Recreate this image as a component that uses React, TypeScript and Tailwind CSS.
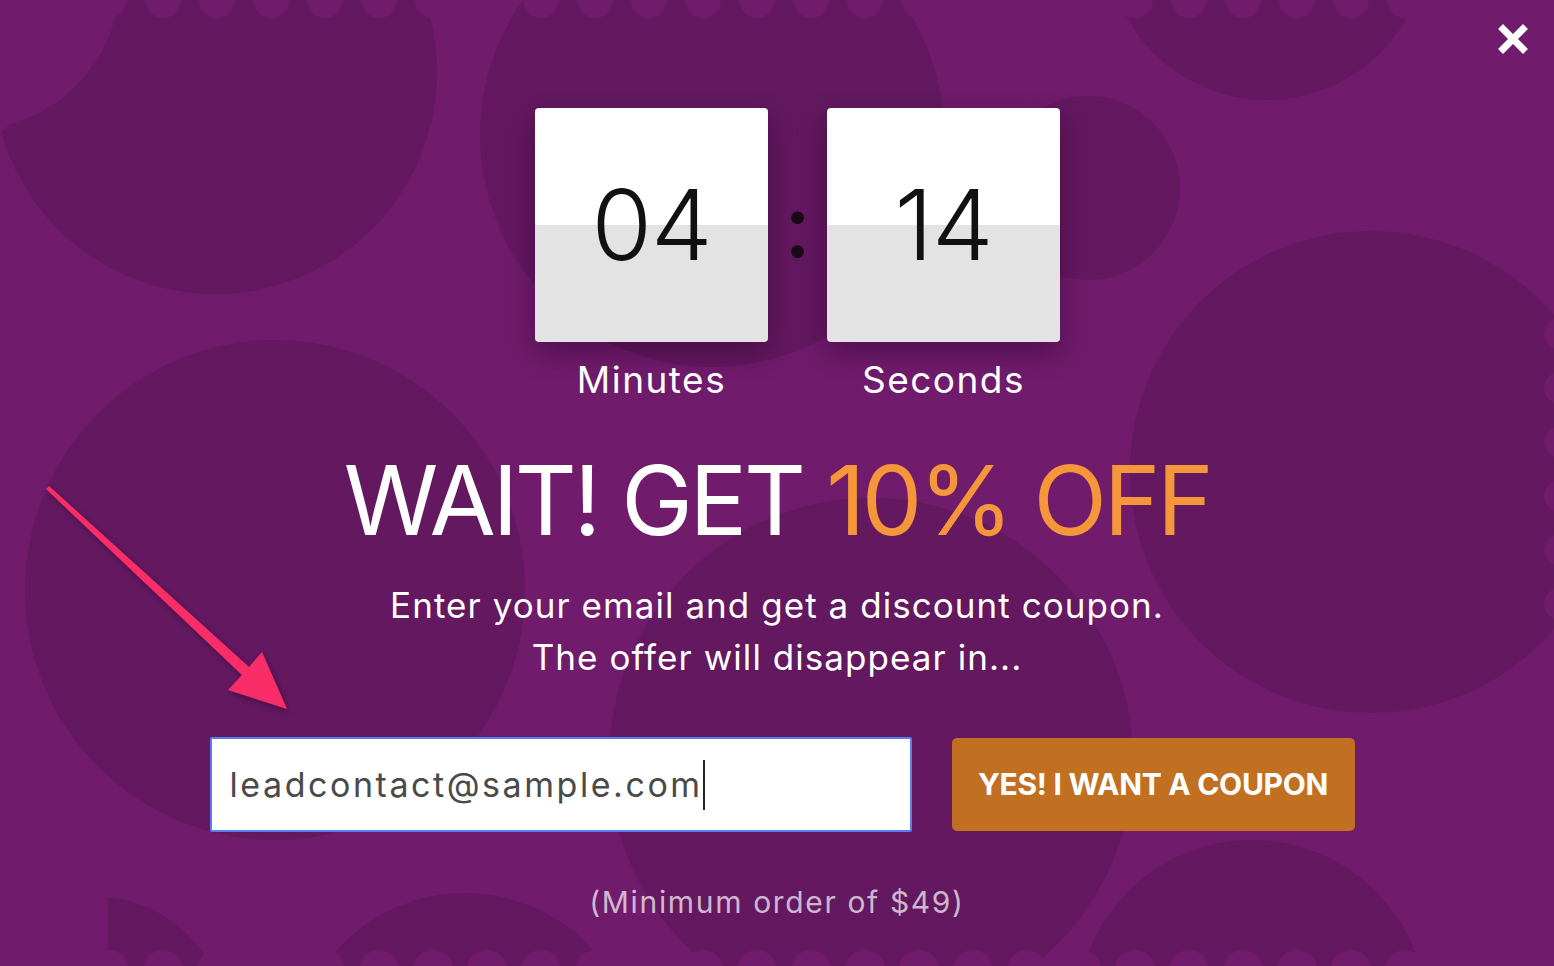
import { X } from "lucide-react";

const BASE = "#701b6c";
const DARK = "#63185f";

// decorative blobs behind the popup
const blobs: [number, number, number][] = [
  [215, 72, 222],
  [712, 135, 232],
  [1088, 188, 92],
  [1267, -60, 160],
  [1371, 472, 241],
  [275, 590, 250],
  [871, 760, 262],
  [465, 1066, 173],
  [1252, 1015, 175],
];

function Backdrop() {
  const top = Array.from({ length: 30 }, (_, i) => 1 + i * 54);
  const side = Array.from({ length: 19 }, (_, i) => 10 + i * 54);
  return (
    <svg
      className="absolute inset-0 pointer-events-none"
      width="1554"
      height="966"
      viewBox="0 0 1554 966">
      {blobs.map(([cx, cy, r], i) => (
        <circle key={i} cx={cx} cy={cy} r={r} fill={DARK} />
      ))}
      <path d="M108,966 L108,897 Q175,905 212,966 Z" fill={DARK} />
      <circle cx={-30} cy={-20} r={150} fill={BASE} />
      {top.map((x) => (
        <circle key={"t" + x} cx={x} cy={0} r={18} fill={BASE} />
      ))}
      {top.map((x) => (
        <circle key={"b" + x} cx={x} cy={970} r={20} fill={BASE} />
      ))}
      {side.map((y) => (
        <circle key={"l" + y} cx={-6} cy={y} r={16} fill={BASE} />
      ))}
      {side.map((y) => (
        <circle key={"r" + y} cx={1560} cy={y} r={16} fill={BASE} />
      ))}
    </svg>
  );
}

function Arrow() {
  return (
    <svg
      className="absolute left-0 top-0 pointer-events-none"
      width="320"
      height="740"
      viewBox="0 0 320 740">
      <defs>
        <filter id="arrowShadow" x="-20%" y="-20%" width="140%" height="140%">
          <feDropShadow dx="2" dy="3" stdDeviation="3" floodColor="#000" floodOpacity="0.3" />
        </filter>
      </defs>
      <path
        d="M46,489 L49,486 L249,667 L262,652 L287,709 L228,690 L242,675 Z"
        fill="#f92d69"
        filter="url(#arrowShadow)"
      />
    </svg>
  );
}

function TimeBox({ value, label }: { value: string; label: string }) {
  return (
    <div className="flex flex-col items-center">
      <div className="w-[233px] h-[234px] rounded-[4px] bg-[linear-gradient(to_bottom,#ffffff_50%,#e3e3e3_50%)] shadow-[0_10px_28px_rgba(40,0,40,0.45)] flex items-center justify-center">
        <span className="text-[98px] leading-none font-light text-[#111] tracking-[-0.01em]">
          {value}
        </span>
      </div>
      <p className="mt-[16px] text-[37px] leading-[44px] text-white tracking-[0.04em]">{label}</p>
    </div>
  );
}

export default function App() {
  return (
    <div
      className="relative w-full h-[966px] overflow-hidden bg-[#701b6c] font-['Inter',sans-serif]">
      <Backdrop />
      <Arrow />

      <button className="absolute top-[19px] right-[21px] text-white z-20" title="Close">
        <X size={40} strokeWidth={4.2} strokeLinecap="square" />
      </button>

      <div className="relative z-10 flex flex-col items-center pt-[108px]">
        {/* Countdown */}
        <div className="flex items-start pl-[41px]">
          <TimeBox value="04" label="Minutes" />
          <div className="w-[59px] h-[234px] flex items-center justify-center">
            <span className="text-[88px] leading-none font-medium text-[#1a0a18]">:</span>
          </div>
          <TimeBox value="14" label="Seconds" />
        </div>

        <h1 className="mt-[50px] text-[96px] leading-[96px] font-normal text-white tracking-[-0.035em]">
          WAIT! GET <span className="text-[#f6963a]">10% OFF</span>
        </h1>

        <p className="mt-[31px] text-[35px] leading-[52px] text-white text-center tracking-[0.03em]">
          Enter your email and get a discount coupon.
          <br />
          The offer will disappear in...
        </p>

        {/* Form */}
        <div className="mt-[54px] flex items-center gap-[40px] pl-[10px]">
          <div className="w-[702px] h-[95px] bg-white border-2 border-[#5a7cf2] rounded-[2px] flex items-center pl-[18px]">
            <span className="text-[34px] text-[#4a4a4a] tracking-[0.075em]">leadcontact@sample.com</span>
            <span className="w-[2px] h-[50px] bg-[#222]" />
          </div>
          <button className="w-[403px] h-[93px] rounded-[5px] bg-[#c16f20] text-white text-[30px] font-bold tracking-[-0.01em]">
            YES! I WANT A COUPON
          </button>
        </div>

        <p className="mt-[50px] text-[30px] leading-[40px] text-white/70 tracking-[0.055em]">
          (Minimum order of $49)
        </p>
      </div>
    </div>
  );
}
